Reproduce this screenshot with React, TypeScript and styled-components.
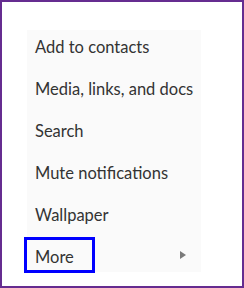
import React from 'react';
import styled, { createGlobalStyle } from 'styled-components';

const GlobalStyle = createGlobalStyle`
  html, body {
    margin: 0;
    padding: 0;
    background: #fff;
  }
`;

const Frame = styled.div`
  box-sizing: border-box;
  width: 244px;
  height: 288px;
  border: 2px solid #652c90;
  background: #fff;
  padding: 28px 0 0 25px;
`;

const Menu = styled.ul`
  list-style: none;
  margin: 0;
  padding: 0 0 2px;
  width: 174px;
  background: #fafafa;
  display: flex;
  flex-direction: column;
  gap: 12px;
  font-family: Lato, Roboto, sans-serif;
  font-size: 16.5px;
  color: #333;
`;

const Item = styled.li`
  display: flex;
  align-items: center;
  justify-content: space-between;
  height: 30px;
  padding-right: 15px;
  white-space: nowrap;
`;

const Label = styled.span<{ $focused?: boolean }>`
  display: flex;
  align-items: center;
  height: 100%;
  padding: 4px 8px 0;
  box-sizing: border-box;
  min-width: ${(p) => (p.$focused ? '65px' : '0')};
  outline: ${(p) => (p.$focused ? '3px solid #0000ff' : 'none')};
`;

const Arrow = styled.span`
  width: 0;
  height: 0;
  border-top: 4px solid transparent;
  border-bottom: 4px solid transparent;
  border-left: 6px solid #7a7a7a;
`;

const items = [
  'Add to contacts',
  'Media, links, and docs',
  'Search',
  'Mute notifications',
  'Wallpaper',
];

export default function App() {
  return (
    <>
      <GlobalStyle />
      <Frame>
        <Menu>
          {items.map((t) => (
            <Item key={t}>
              <Label>{t}</Label>
            </Item>
          ))}
          <Item>
            <Label $focused>More</Label>
            <Arrow />
          </Item>
        </Menu>
      </Frame>
    </>
  );
}
